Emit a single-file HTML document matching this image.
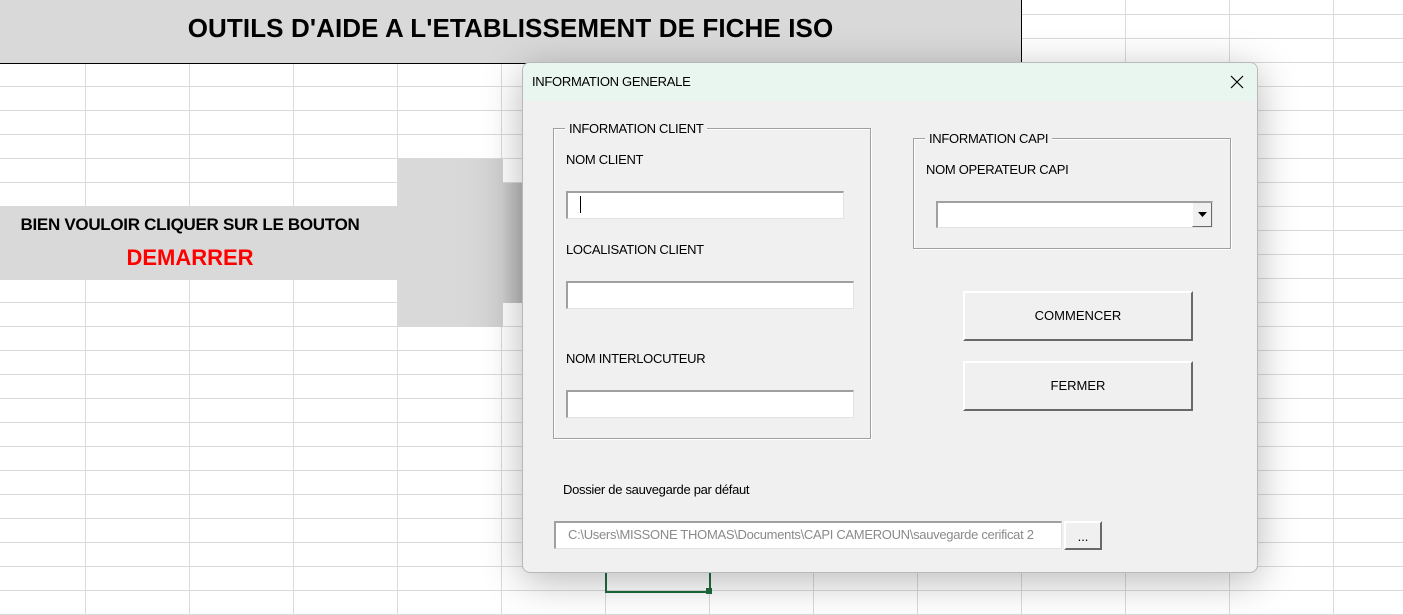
<!DOCTYPE html>
<html><head><meta charset="utf-8"><style>
*{margin:0;padding:0;box-sizing:border-box}
body{width:1403px;height:615px;overflow:hidden;position:relative;background:#fff;font-family:"Liberation Sans",sans-serif}
.grid{position:absolute;left:0;top:0;width:1403px;height:615px;
background-image:repeating-linear-gradient(to right,transparent 0,transparent 84px,#dadada 84px,#dadada 85px,transparent 85px,transparent 104px),
repeating-linear-gradient(to bottom,transparent 0,transparent 14px,#dadada 14px,#dadada 15px,transparent 15px,transparent 24px);
background-position:1px 0,0 0}
.abs{position:absolute}
.hdr{left:0;top:0;width:1022px;height:64px;background:#d9d9d9;border-right:1px solid #000;border-bottom:1px solid #000;text-align:center;font-weight:bold;font-size:26px;line-height:56px;color:#000;letter-spacing:0.1px}
.g{background:#d9d9d9}
.dlg{left:522px;top:62px;width:736px;height:511px;background:#f0f0f0;border:1px solid #b8b8b8;border-radius:8px;box-shadow:0 8px 40px rgba(0,0,0,0.28);overflow:hidden}
.tb{left:0;top:0;width:100%;height:38px;background:#e8f6ef}
.t{position:absolute;font-size:13px;color:#000;white-space:nowrap;letter-spacing:-0.3px}
.fr{position:absolute;border:1px solid #a0a0a0;box-shadow:1px 1px 0 #fff inset,1px 1px 0 #fff}
.leg{position:absolute;background:#f0f0f0;padding:0 4px;font-size:13px;top:-8px;left:11px;letter-spacing:-0.3px}
.in{position:absolute;background:#fff;border-top:2px solid #a0a0a0;border-left:2px solid #a0a0a0;border-right:1px solid #e3e3e3;border-bottom:1px solid #e3e3e3}
.btn{position:absolute;background:#f0f0f0;border-top:2px solid #fff;border-left:2px solid #fff;border-right:2px solid #696969;border-bottom:2px solid #696969;text-align:center;font-size:13px}
</style></head><body>
<div class="grid"></div>
<div class="abs hdr">OUTILS D'AIDE A L'ETABLISSEMENT DE FICHE ISO</div>
<div class="abs g" style="left:0;top:207px;width:398px;height:73px"></div>
<div class="abs g" style="left:397px;top:159px;width:106px;height:168px;background:linear-gradient(to right,#d9d9d9 60%,#d0d0d0)"></div>
<div class="abs g" style="left:502px;top:183px;width:22px;height:120px;background:linear-gradient(to right,#cfcfcf,#b8b8b8)"></div>
<div class="abs" style="left:0;top:215px;width:380px;text-align:center;font-weight:bold;font-size:17px;letter-spacing:-0.3px">BIEN VOULOIR CLIQUER SUR LE BOUTON</div>
<div class="abs" style="left:0;top:245px;width:380px;text-align:center;font-weight:bold;font-size:22px;color:#f00">DEMARRER</div>
<div class="abs" style="left:605px;top:560px;width:106px;height:33px;border:2px solid #1e6b3e"></div>
<div class="abs" style="left:706px;top:588px;width:6px;height:6px;background:#1e6b3e"></div>
<div class="abs dlg">
 <div class="abs tb"></div>
 <div class="t" style="left:9px;top:11px">INFORMATION GENERALE</div>
 <svg class="abs" style="left:707px;top:12px" width="14" height="14"><path d="M1 1L13 13M13 1L1 13" stroke="#000" stroke-width="1.2"/></svg>
 <div class="fr" style="left:30px;top:65px;width:318px;height:311px"><div class="leg">INFORMATION CLIENT</div></div>
 <div class="t" style="left:43px;top:89px">NOM CLIENT</div>
 <div class="in" style="left:43px;top:128px;width:278px;height:28px"><div style="position:absolute;left:12px;top:3px;width:1px;height:17px;background:#000"></div></div>
 <div class="t" style="left:43px;top:179px">LOCALISATION CLIENT</div>
 <div class="in" style="left:43px;top:218px;width:288px;height:28px"></div>
 <div class="t" style="left:43px;top:288px">NOM INTERLOCUTEUR</div>
 <div class="in" style="left:43px;top:327px;width:288px;height:28px"></div>
 <div class="fr" style="left:390px;top:75px;width:318px;height:111px"><div class="leg">INFORMATION CAPI</div></div>
 <div class="t" style="left:403px;top:99px">NOM OPERATEUR CAPI</div>
 <div class="in" style="left:413px;top:138px;width:277px;height:27px"><div style="position:absolute;right:0;top:0;width:20px;height:24px;background:#f0f0f0;border-left:1px solid #fff;border-right:1px solid #696969;border-bottom:1px solid #696969"><svg style="position:absolute;left:5px;top:9px" width="9" height="5"><path d="M0 0H9L4.5 5Z" fill="#000"/></svg></div></div>
 <div class="btn" style="left:440px;top:228px;width:230px;height:50px;line-height:46px">COMMENCER</div>
 <div class="btn" style="left:440px;top:298px;width:230px;height:50px;line-height:46px">FERMER</div>
 <div class="t" style="left:40px;top:419px">Dossier de sauvegarde par défaut</div>
 <div class="in" style="left:31px;top:458px;width:508px;height:28px;background:#fff"><div class="t" style="left:12px;top:4px;color:#8a8a8a">C:\Users\MISSONE THOMAS\Documents\CAPI CAMEROUN\sauvegarde cerificat 2</div></div>
 <div class="btn" style="left:541px;top:458px;width:38px;height:29px;line-height:28px">...</div>
</div>
</body></html>
